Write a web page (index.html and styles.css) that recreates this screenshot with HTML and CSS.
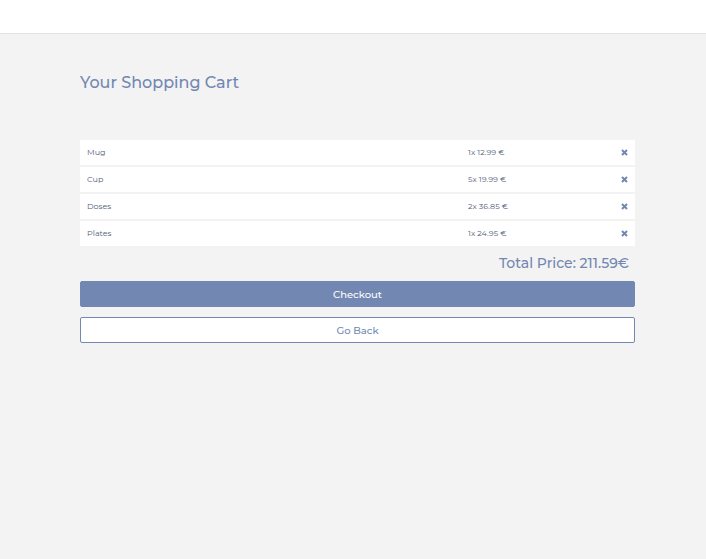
FILE: index.html
```html
<!DOCTYPE html>
<html lang="en">
<head>
<meta charset="utf-8">
<meta name="viewport" content="width=device-width, initial-scale=1">
<title>Your Shopping Cart</title>
<link rel="stylesheet" href="styles.css">
</head>
<body>
<header class="topbar"></header>
<main class="cart">
  <h1 class="title">Your Shopping Cart</h1>
  <table class="items">
    <tbody>
      <tr><td>Mug</td><td class="price">1x 12.99 €</td><td class="action"><button class="remove" type="button" aria-label="Remove Mug"><svg viewBox="0 0 7 7"><path d="M1 1 6 6M6 1 1 6"/></svg></button></td></tr>
      <tr><td>Cup</td><td class="price">5x 19.99 €</td><td class="action"><button class="remove" type="button" aria-label="Remove Cup"><svg viewBox="0 0 7 7"><path d="M1 1 6 6M6 1 1 6"/></svg></button></td></tr>
      <tr><td>Doses</td><td class="price">2x 36.85 €</td><td class="action"><button class="remove" type="button" aria-label="Remove Doses"><svg viewBox="0 0 7 7"><path d="M1 1 6 6M6 1 1 6"/></svg></button></td></tr>
      <tr><td>Plates</td><td class="price">1x 24.95 €</td><td class="action"><button class="remove" type="button" aria-label="Remove Plates"><svg viewBox="0 0 7 7"><path d="M1 1 6 6M6 1 1 6"/></svg></button></td></tr>
    </tbody>
  </table>
  <p class="total">Total Price: 211.59€</p>
  <div class="buttons">
    <button class="button primary" type="button">Checkout</button>
    <button class="button" type="button">Go Back</button>
  </div>
</main>
</body>
</html>
```

FILE: styles.css
```css
* {
  box-sizing: border-box;
}

body {
  margin: 0;
  background: #f3f3f3;
  color: #525d78;
  font-family: Montserrat, Inter, "Open Sans", sans-serif;
}

.topbar {
  height: 34px;
  background: #fff;
  border-bottom: 1px solid #e4e4e4;
}

.cart {
  padding: 37px 71px 36px 80px;
}

.title {
  margin: 0 0 43px;
  color: #7287b2;
  font-size: 16px;
  font-weight: 500;
  line-height: 24px;
}

.items {
  width: 100%;
  border-spacing: 0 2px;
  table-layout: fixed;
  font-size: 8px;
  line-height: 25px;
}

.items td {
  padding: 0 7px;
  background: #fff;
}

.items .price {
  width: 134px;
  padding-left: 0;
}

.items .action {
  width: 33px;
}

.remove {
  display: block;
  margin-left: auto;
  padding: 0;
  border: 0;
  background: none;
  color: #7287b2;
  cursor: pointer;
}

.remove svg {
  display: block;
  width: 7px;
  height: 7px;
  fill: none;
  stroke: currentColor;
  stroke-width: 2;
}

.total {
  margin: 5px 6px 8px;
  color: #7287b2;
  font-size: 14px;
  font-weight: 500;
  line-height: 20px;
  text-align: right;
}

.buttons {
  display: grid;
  gap: 10px;
}

.button {
  height: 26px;
  padding: 0;
  border: 1px solid #7287b2;
  border-radius: 2px;
  background: #fff;
  color: #7287b2;
  font: inherit;
  font-size: 10px;
  font-weight: 500;
  cursor: pointer;
}

.primary {
  background: #7287b2;
  color: #fff;
}
```
